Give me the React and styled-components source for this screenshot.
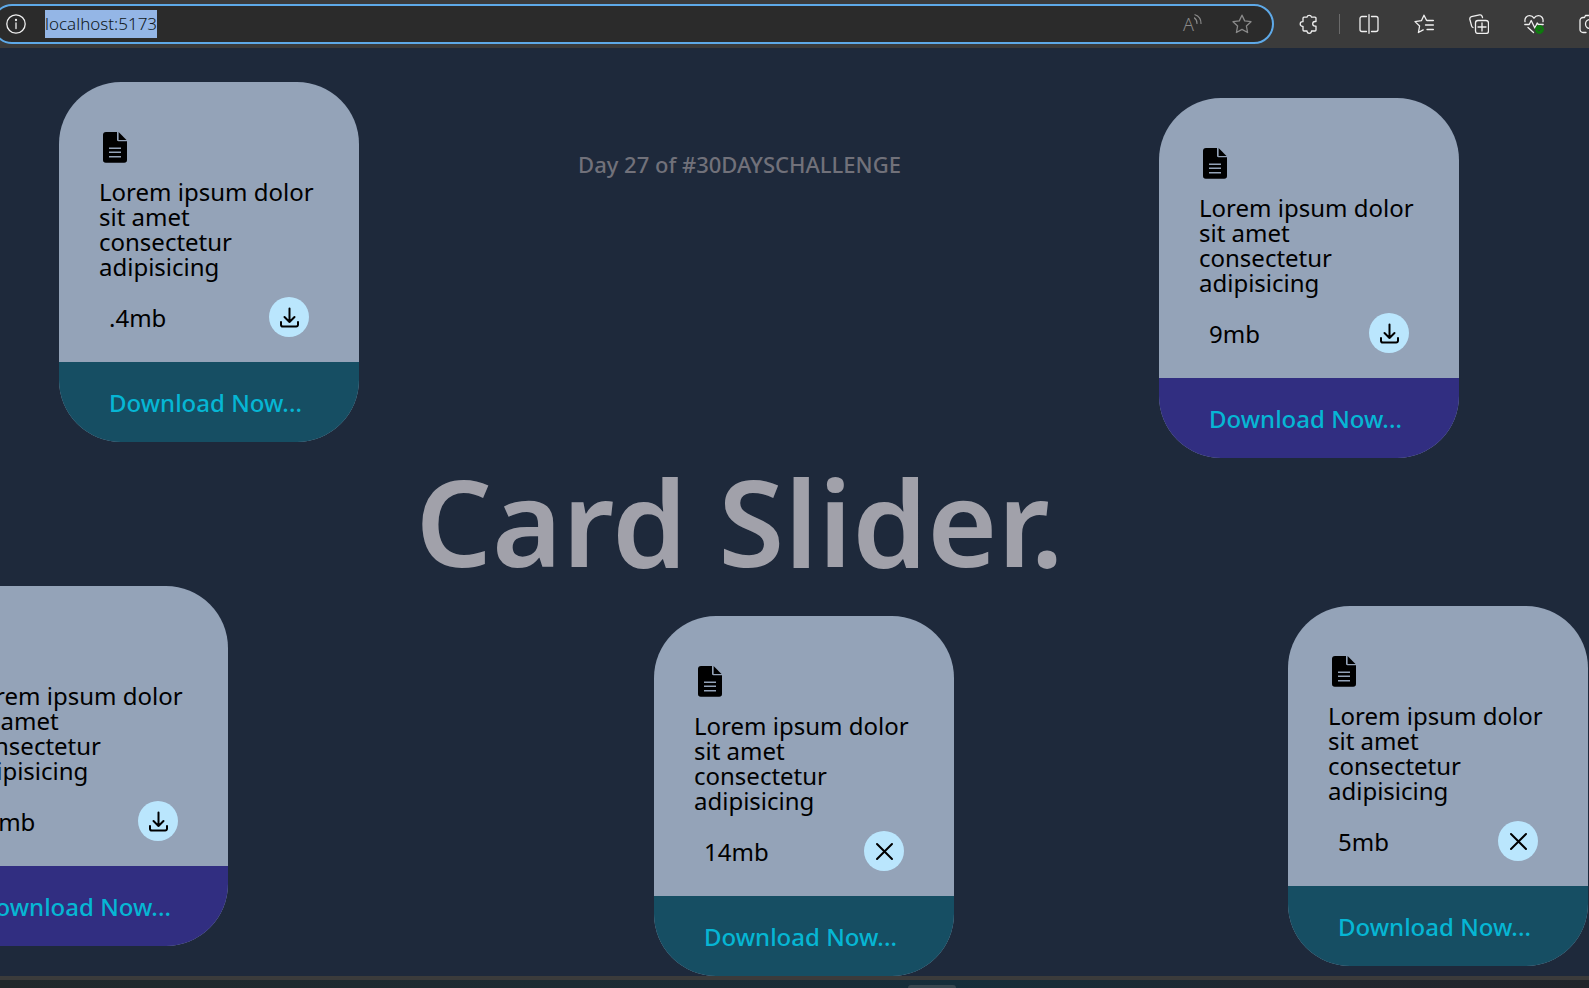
import React from "react";
import styled, { createGlobalStyle } from "styled-components";

const GlobalStyle = createGlobalStyle`
  *, *::before, *::after { box-sizing: border-box; }
  body {
    margin: 0;
    background: #1e293b;
    color: #000;
    font-family: "Noto Sans", "Open Sans", sans-serif;
    overflow: hidden;
  }
  button, input { font: inherit; color: inherit; border: 0; padding: 0; margin: 0; background: none; }
  button { cursor: pointer; }
  h1, p { margin: 0; }
  svg { display: block; flex: none; }
`;

const Page = styled.div`
  display: flex;
  flex-direction: column;
  min-height: 100vh;
  overflow: hidden;
`;

const BrowserBar = styled.header`
  display: flex;
  align-items: center;
  height: 48px;
  background: #3b3b3b;
  overflow: hidden;
`;

const AddressBar = styled.div`
  display: flex;
  align-items: center;
  flex: 1;
  min-width: 0;
  height: 40px;
  margin-left: -8px;
  padding: 0 20px 0 12px;
  border: 2px solid #5ea9e8;
  border-radius: 20px;
  background: #2b2b2b;
  color: #f0f0f0;
`;

const AddressInput = styled.input`
  field-sizing: content;
  height: 28px;
  margin: 0 auto 0 19px;
  padding-bottom: 2px;
  background: #94b6e6;
  color: #101820;
  font-size: 17px;
  font-weight: 300;
  outline: none;
`;

const IconButton = styled.button`
  display: flex;
  align-items: center;
  justify-content: center;
  flex: none;
  height: 24px;
  min-width: 20px;
  color: ${(p) => (p.$muted ? "#8a8a8a" : "#f0f0f0")};
`;

const AddressActions = styled.div`
  display: flex;
  align-items: center;
  gap: 28px;
`;

const ReadAloudLetter = styled.span`
  font-size: 18px;
  line-height: 20px;
  font-weight: 300;
`;

const Toolbar = styled.nav`
  display: flex;
  align-items: center;
  gap: 35px;
  flex: none;
  width: 315px;
  padding-left: 25px;
  overflow: hidden;
`;

const ExtensionsGroup = styled.div`
  display: flex;
  align-items: center;
  gap: 20px;
  flex: none;
  margin-right: -16px;
`;

const Divider = styled.span`
  width: 1px;
  height: 20px;
  background: #6a6a6a;
`;

const Canvas = styled.main`
  position: relative;
  display: flex;
  flex-direction: column;
  align-items: center;
  flex: 1;
  padding: 101px 110px 0 0;
  overflow: hidden;
`;

const Challenge = styled.p`
  color: #71717a;
  font-size: 22px;
  line-height: 30px;
  font-weight: 500;
`;

const Title = styled.h1`
  margin-top: 256px;
  color: #a1a1aa;
  font-size: 120px;
  line-height: 172px;
  font-weight: 600;
`;

const Card = styled.article`
  position: absolute;
  left: ${(p) => p.$x}px;
  top: ${(p) => p.$y}px;
  display: flex;
  flex-direction: column;
  width: 300px;
  height: 360px;
  padding-top: 50px;
  border-radius: 62px;
  background: #94a3b8;
  overflow: hidden;
  font-size: 24px;
  font-weight: 400;
`;

const CardBody = styled.div`
  display: flex;
  flex-direction: column;
  flex: 1;
  padding: 0 40px;
`;

const CardText = styled.p`
  margin-top: 15px;
  line-height: 25px;
`;

const CardMeta = styled.div`
  display: flex;
  align-items: center;
  justify-content: space-between;
  margin-top: 18px;
  padding: 0 10px;
`;

const RoundButton = styled.button`
  display: flex;
  align-items: center;
  justify-content: center;
  width: 40px;
  height: 40px;
  border-radius: 50%;
  background: #bae6fd;
`;

const CardAction = styled.button`
  height: 80px;
  padding: 0 50px;
  background: ${(p) => (p.$tone === "indigo" ? "#312e81" : "#164e63")};
  color: #06b6d4;
  font-weight: 500;
  text-align: left;
  white-space: nowrap;
`;

const Taskbar = styled.footer`
  height: 12px;
  border-top: 4px solid #3b3b3b;
  background: linear-gradient(90deg, #20282b 0%, #1b2c35 45%, #152e3a 60%, #22262e 85%, #20242a 100%);
`;

const TaskbarHandle = styled.div`
  width: 48px;
  height: 3px;
  margin: 5px 0 0 908px;
  border-radius: 3px 3px 0 0;
  background: #37474f;
`;

const Glyph = ({ children, size = 20, weight = 1.3 }) => (
  <svg
    width={size}
    height={size}
    viewBox={`0 0 ${size} ${size}`}
    fill="none"
    stroke="currentColor"
    strokeWidth={weight}
    strokeLinecap="round"
    strokeLinejoin="round"
    aria-hidden="true"
  >
    {children}
  </svg>
);

const InfoGlyph = () => (
  <Glyph>
    <circle cx="10" cy="10" r="9.2" />
    <path d="M10 9v5.5" />
    <circle cx="10" cy="6" r="0.5" fill="currentColor" />
  </Glyph>
);

const WavesGlyph = () => (
  <svg width="10" height="20" viewBox="0 0 10 20" fill="none" stroke="currentColor" strokeWidth="1.2" strokeLinecap="round" aria-hidden="true">
    <path d="M-0.500 3.500C2 4.500 3 7 3 9.500" />
    <path d="M1 .7C5 2 7 5.500 7 9.500" />
  </svg>
);

const StarGlyph = () => (
  <Glyph>
    <path d="M10 1.200l2.700 5.700 6.300.8-4.600 4.300 1.200 6.500L10 15.400l-5.600 3.100 1.200-6.500L1 7.700l6.300-.8z" />
  </Glyph>
);

const PuzzleGlyph = () => (
  <Glyph>
    <path d="M8 3.200a2.300 2.300 0 0 1 4.500 0H16a1 1 0 0 1 1 1v3.300h-1a2.300 2.300 0 0 0 0 4.600h1V16a1 1 0 0 1-1 1h-3.500v.5a2.300 2.300 0 0 1-4.500 0V17H5a1 1 0 0 1-1-1v-3.700h-.5a2.300 2.300 0 0 1 0-4.600H4V4.200a1 1 0 0 1 1-1z" />
  </Glyph>
);

const SplitGlyph = () => (
  <Glyph>
    <path d="M7.500 2.500H3a2 2 0 0 0-2 2v11a2 2 0 0 0 2 2h4.500M12.500 2.500H17a2 2 0 0 1 2 2v11a2 2 0 0 1-2 2h-4.500M10 .7v18.600" />
  </Glyph>
);

const FavoritesGlyph = () => (
  <Glyph>
    <path d="M12.500 6.300L10 1.200 7.400 6.700l-6.400.9 4.600 4.400-1.200 6.500 4.800-2.600M13 6.500h6.400M11.500 11h7.900M13 15.500h6.400" />
  </Glyph>
);

const CollectionsGlyph = () => (
  <Glyph>
    <rect x="6.500" y="6.500" width="13" height="13" rx="2.500" />
    <path d="M13 9v8M9 13h8M4 13.500c-.8-.3-1.200-.8-1.400-1.700L.9 5.500c-.3-1.400.2-2.400 1.500-2.800L10.500.9c1.300-.3 2.300.3 2.700 1.600l.3 1.200" />
  </Glyph>
);

const EssentialsGlyph = () => (
  <Glyph>
    <path d="M1 7.600C.4 4 2.800 1.600 5.600 1.600c1.900 0 3.400 1 4.400 2.600 1-1.600 2.500-2.600 4.400-2.600C17.200 1.600 19.600 4 19 7.600M.8 10.500h4.400l2-4 3.600 7.500 2.400-5 1.200 1.500h4.800M4 13.500l5.500 5" />
    <circle cx="15.500" cy="15.500" r="4" fill="#0f7b0f" stroke="#0f7b0f" strokeWidth="1" />
    <path d="M13.800 16l1.200 1 2.500-2.600" stroke="#3b3b3b" strokeWidth="0.9" />
  </Glyph>
);

const CaptureGlyph = () => (
  <Glyph>
    <path d="M4 18.500a3 3 0 0 1-3-3v-9a3 3 0 0 1 3-3h1.500l1-2h7l1 2H19M7 18.500H4" />
    <circle cx="11" cy="10" r="4.500" />
  </Glyph>
);

const FileGlyph = () => (
  <svg width="32" height="32" viewBox="0 0 32 32" aria-hidden="true">
    <path
      fill="currentColor"
      fillRule="evenodd"
      d="M7 0h11v7.700A1.600 1.600 0 0 0 19.600 9.300H28V28a2.800 2.800 0 0 1-2.800 2.800H6.800A2.800 2.800 0 0 1 4 28V3a3 3 0 0 1 3-3zM10 15.500v1.500h12v-1.500zM10 19.600v1.500h12v-1.500zM10 24v1.500h12v-1.500z"
    />
    <path fill="currentColor" d="M19.600 0l7.900 7.900h-7.900z" />
  </svg>
);

const DownloadGlyph = () => (
  <Glyph size={24} weight={2}>
    <path d="M12.500 3.500V17M7.500 12l5 5 5-5M4 17v2.700a1.800 1.800 0 0 0 1.800 1.800h13.400a1.800 1.800 0 0 0 1.800-1.800V17" />
  </Glyph>
);

const CloseGlyph = () => (
  <Glyph size={24} weight={2}>
    <path d="M5 5l15 15M20 5L5 20" />
  </Glyph>
);

const cards = [
  { id: 1, x: 59, y: 34, size: ".4mb", tone: "cyan" },
  { id: 2, x: 1159, y: 50, size: "9mb", tone: "indigo" },
  { id: 3, x: -72, y: 538, size: ".9mb", tone: "indigo" },
  { id: 4, x: 654, y: 568, size: "14mb", tone: "cyan", close: true },
  { id: 5, x: 1288, y: 558, size: "5mb", tone: "cyan", close: true },
];

const FileCard = ({ x, y, size, tone, close }) => (
  <Card $x={x} $y={y}>
    <CardBody>
      <FileGlyph />
      <CardText>Lorem ipsum dolor sit amet consectetur adipisicing</CardText>
      <CardMeta>
        <span>{size}</span>
        <RoundButton type="button" aria-label={close ? "Remove file" : "Download file"}>
          {close ? <CloseGlyph /> : <DownloadGlyph />}
        </RoundButton>
      </CardMeta>
    </CardBody>
    <CardAction type="button" $tone={tone}>Download Now...</CardAction>
  </Card>
);

export default function App() {
  return (
    <Page>
      <GlobalStyle />
      <BrowserBar>
        <AddressBar>
          <IconButton type="button" aria-label="Site information"><InfoGlyph /></IconButton>
          <AddressInput aria-label="Address" defaultValue="localhost:5173" />
          <AddressActions>
            <IconButton type="button" $muted aria-label="Read aloud">
              <ReadAloudLetter>A</ReadAloudLetter>
              <WavesGlyph />
            </IconButton>
            <IconButton type="button" $muted aria-label="Add to favorites"><StarGlyph /></IconButton>
          </AddressActions>
        </AddressBar>
        <Toolbar aria-label="Browser tools">
          <ExtensionsGroup>
            <IconButton type="button" aria-label="Extensions"><PuzzleGlyph /></IconButton>
            <Divider />
          </ExtensionsGroup>
          <IconButton type="button" aria-label="Split screen"><SplitGlyph /></IconButton>
          <IconButton type="button" aria-label="Favorites"><FavoritesGlyph /></IconButton>
          <IconButton type="button" aria-label="Collections"><CollectionsGlyph /></IconButton>
          <IconButton type="button" aria-label="Browser essentials"><EssentialsGlyph /></IconButton>
          <IconButton type="button" aria-label="Screenshot"><CaptureGlyph /></IconButton>
        </Toolbar>
      </BrowserBar>
      <Canvas>
        <Challenge>Day 27 of #30DAYSCHALLENGE</Challenge>
        <Title>Card Slider.</Title>
        {cards.map((card) => (
          <FileCard key={card.id} {...card} />
        ))}
      </Canvas>
      <Taskbar>
        <TaskbarHandle />
      </Taskbar>
    </Page>
  );
}
